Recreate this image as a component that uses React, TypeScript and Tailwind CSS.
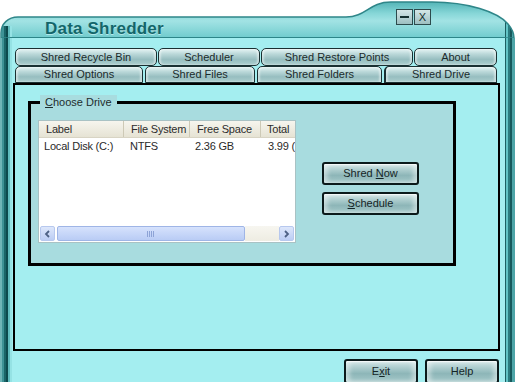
import React from "react";

const TAB_BG =
  "bg-[linear-gradient(180deg,#e6f4f4_0%,#bcd9da_30%,#97bec0_65%,#aacdce_100%)]";
const BTN_BG =
  "bg-[linear-gradient(180deg,#d3e7e7_0%,#a9cacb_35%,#8db6b8_60%,#a5c8c9_100%)]";

const SHAPE =
  "M1,38 L1,33 C1,24 8,17 18,17 L346,17 C366,17 369,2 391,2 L432,2 C468,2 498,12 508,24 C513,30 514,34 514,38 Z";

function TitleSkin() {
  return (
    <svg className="absolute inset-0" width="515" height="38" viewBox="0 0 515 38">
      <defs>
        <linearGradient id="tb" gradientUnits="userSpaceOnUse" x1="0" y1="0" x2="0" y2="38">
          <stop offset="0" stopColor="#4aaeb1" />
          <stop offset="0.35" stopColor="#86d6d7" />
          <stop offset="0.55" stopColor="#a2e3e4" />
          <stop offset="1" stopColor="#6fcbcd" />
        </linearGradient>
        <linearGradient id="lf" gradientUnits="userSpaceOnUse" x1="0" y1="0" x2="12" y2="0">
          <stop offset="0" stopColor="#6fb5b7" />
          <stop offset="0.17" stopColor="#6fb5b7" />
          <stop offset="0.17" stopColor="#3e9396" />
          <stop offset="0.34" stopColor="#3e9396" />
          <stop offset="0.34" stopColor="#1a6568" />
          <stop offset="0.5" stopColor="#1a6568" />
          <stop offset="0.5" stopColor="#0c4a4d" />
          <stop offset="0.67" stopColor="#0c4a4d" />
          <stop offset="0.67" stopColor="#5fbcbe" />
          <stop offset="0.84" stopColor="#5fbcbe" />
          <stop offset="0.84" stopColor="#95e2e4" />
          <stop offset="1" stopColor="#95e2e4" />
        </linearGradient>
        <clipPath id="shape">
          <path d={SHAPE} />
        </clipPath>
      </defs>
      <path d={SHAPE} fill="url(#tb)" />
      <g clipPath="url(#shape)">
        <rect x="0" y="26" width="12" height="12" fill="url(#lf)" />
        <rect x="505" y="22" width="1" height="16" fill="#1b5f62" />
        <rect x="506" y="22" width="2" height="16" fill="#62c4c6" />
        <rect x="508" y="22" width="2" height="16" fill="#2a7c80" />
        <rect x="510" y="22" width="2" height="16" fill="#17595c" />
        <rect x="512" y="22" width="3" height="16" fill="#4ea5a8" />
      </g>
      <path d={SHAPE} fill="none" stroke="#2f8689" strokeWidth="1.5" />
      <line x1="10" y1="37.5" x2="505" y2="37.5" stroke="#2d8588" strokeWidth="1" />
    </svg>
  );
}

function CaptionBox({ children }: { children: React.ReactNode }) {
  return (
    <div className="flex h-[16px] w-[17px] items-center justify-center border border-[#2c4a4c] bg-[linear-gradient(180deg,#d4e6e6,#9dbfc1)] text-[11px] leading-none text-[#15302f]">
      {children}
    </div>
  );
}

function Tab({
  label,
  className,
  selected,
}: {
  label: string;
  className: string;
  selected?: boolean;
}) {
  return (
    <div
      className={`${className} ${TAB_BG} flex justify-center border border-[#1a3032] rounded-[5px] text-[11px] text-[#1b2b2c] shadow-[inset_2px_0_2px_rgba(255,255,255,0.45),inset_-2px_0_2px_rgba(255,255,255,0.45)] ${
        selected ? "items-end pb-[0px] border-l-2" : "items-center"
      }`}
    >
      {label}
    </div>
  );
}

function SkinButton({
  children,
  className,
}: {
  children: React.ReactNode;
  className: string;
}) {
  return (
    <div
      className={`${className} ${BTN_BG} flex items-center justify-center rounded-[3px] border-2 border-[#0b1a1b] text-[11px] text-[#152526] shadow-[inset_4px_0_4px_rgba(255,255,255,0.4),inset_-4px_0_4px_rgba(255,255,255,0.4),inset_0_1px_1px_rgba(255,255,255,0.7)]`}
    >
      {children}
    </div>
  );
}

function ScrollArrow({ dir }: { dir: "l" | "r" }) {
  return (
    <div className="flex h-[15px] w-[15px] items-center justify-center rounded-[2px] border border-[#b7c8ee] bg-[linear-gradient(180deg,#dde7fb,#bccdf4)]">
      <svg width="7" height="8" viewBox="0 0 7 8">
        <path
          d={dir === "l" ? "M5,1 L2,4 L5,7" : "M2,1 L5,4 L2,7"}
          fill="none"
          stroke="#4d6185"
          strokeWidth="1.8"
        />
      </svg>
    </div>
  );
}

function ListView() {
  const head = "flex items-center border-r border-[#cdc9b6] pl-[7px] shrink-0";
  return (
    <div className="flex h-[123px] w-[258px] flex-col overflow-hidden border border-[#a9c2c4] bg-white text-[11px] tracking-[-0.2px]">
      <div className="flex h-[17px] shrink-0 border-b border-[#d8d4c4] bg-[linear-gradient(180deg,#f6f5ee,#e6e3d4)] text-[#2c2c2c]">
        <div className={`${head} w-[85px]`}>Label</div>
        <div className={`${head} w-[66px]`}>File System</div>
        <div className={`${head} w-[71px]`}>Free Space</div>
        <div className="flex items-center pl-[6px] whitespace-nowrap">Total</div>
      </div>
      <div className="flex h-[17px] shrink-0 items-center whitespace-nowrap text-[#2a2a2a]">
        <div className="w-[85px] shrink-0 pl-[5px]">Local Disk (C:)</div>
        <div className="w-[66px] shrink-0 pl-[6px]">NTFS</div>
        <div className="w-[71px] shrink-0 pl-[5px]">2.36 GB</div>
        <div className="pl-[7px]">3.99 (</div>
      </div>
      <div className="flex-1" />
      <div className="mb-[1px] flex h-[15px] shrink-0 items-center px-[1px]">
        <ScrollArrow dir="l" />
        <div className="ml-[2px] flex h-[15px] w-[188px] items-center justify-center rounded-[2px] border border-[#9fb5e6] bg-[linear-gradient(180deg,#d6e2fc,#b9ccf5)]">
          <svg width="8" height="6" viewBox="0 0 8 6">
            <path d="M0.5,0 V6 M2.5,0 V6 M4.5,0 V6 M6.5,0 V6" stroke="#8da3d6" strokeWidth="1" />
          </svg>
        </div>
        <div className="h-[15px] flex-1 bg-[linear-gradient(180deg,#f7f6f0,#eeece2)]" />
        <ScrollArrow dir="r" />
      </div>
    </div>
  );
}

export default function App() {
  return (
    <div className="flex h-[382px] w-[515px] flex-col overflow-hidden bg-white font-['Liberation_Sans',Arial,sans-serif]">
      {/* Title bar skin */}
      <div className="relative flex h-[38px] shrink-0">
        <TitleSkin />
        <div className="relative ml-[45px] mt-[16px] text-[17px] font-bold tracking-[0.2px] text-[#13666a] [text-shadow:0_1px_0_rgba(220,250,250,0.6)]">
          Data Shredder
        </div>
        <div className="relative ml-auto mr-[84px] mt-[9px] flex gap-[1px] self-start">
          <CaptionBox>
            <span className="block h-[2px] w-[9px] bg-[#15302f]" />
          </CaptionBox>
          <CaptionBox>X</CaptionBox>
        </div>
      </div>

      {/* Body */}
      <div className="flex flex-1">
        <div className="w-[12px] shrink-0 bg-[linear-gradient(90deg,#6fb5b7_0px,#6fb5b7_2px,#3e9396_2px,#3e9396_4px,#1a6568_4px,#1a6568_6px,#0c4a4d_6px,#0c4a4d_8px,#5fbcbe_8px,#5fbcbe_10px,#95e2e4_10px,#95e2e4_12px)]" />

        <div className="flex flex-1 flex-col bg-[#a4eef0] pt-[10px]">
          <div className="ml-[3px] flex gap-[1px]">
            <Tab label="Shred Recycle Bin" className="h-[18px] w-[142px] pt-[1px]" />
            <Tab label="Scheduler" className="h-[18px] w-[102px] pt-[1px]" />
            <Tab label="Shred Restore Points" className="h-[18px] w-[152px] pt-[1px]" />
            <Tab label="About" className="h-[18px] w-[83px] pt-[1px]" />
          </div>
          <div className="ml-[3px] flex gap-[2px]">
            <Tab label="Shred Options" className="h-[17px] w-[128px] rounded-b-none" />
            <Tab label="Shred Files" className="h-[17px] w-[110px] rounded-b-none" />
            <Tab label="Shred Folders" className="h-[17px] w-[125px] rounded-b-none" />
            <Tab label="Shred Drive" className="h-[17px] w-[113px] rounded-b-none" selected />
          </div>

          {/* Tab panel */}
          <div className="ml-[1px] h-[268px] w-[487px] border-2 border-black">
            <div className="relative ml-[13px] mt-[16px] h-[165px] w-[428px] border-[3px] border-black bg-[#a8dcdf]">
              <div className="absolute -top-[9px] left-[9px] bg-[#a8dcdf] px-[5px] text-[11px] leading-[14px] text-[#1e2d2e]">
                <span className="underline">C</span>hoose Drive
              </div>
              <div className="ml-[7px] mt-[16px] flex items-start">
                <ListView />
                <div className="ml-[26px] mt-[42px] flex flex-col gap-[7px]">
                  <SkinButton className="h-[23px] w-[97px]">
                    <span>
                      Shred <span className="underline">N</span>ow
                    </span>
                  </SkinButton>
                  <SkinButton className="h-[23px] w-[97px]">
                    <span>
                      <span className="underline">S</span>chedule
                    </span>
                  </SkinButton>
                </div>
              </div>
            </div>
          </div>

          <div className="mt-[8px] flex justify-end gap-[7px] pr-[6px]">
            <SkinButton className="h-[25px] w-[74px]">
              <span>
                E<span className="underline">x</span>it
              </span>
            </SkinButton>
            <SkinButton className="h-[25px] w-[74px]">Help</SkinButton>
          </div>
        </div>

        <div className="w-[10px] shrink-0 bg-[linear-gradient(90deg,#1b5f62_0px,#1b5f62_1px,#62c4c6_1px,#62c4c6_3px,#2a7c80_3px,#2a7c80_5px,#17595c_5px,#17595c_7px,#4ea5a8_7px,#4ea5a8_10px)]" />
      </div>
    </div>
  );
}
